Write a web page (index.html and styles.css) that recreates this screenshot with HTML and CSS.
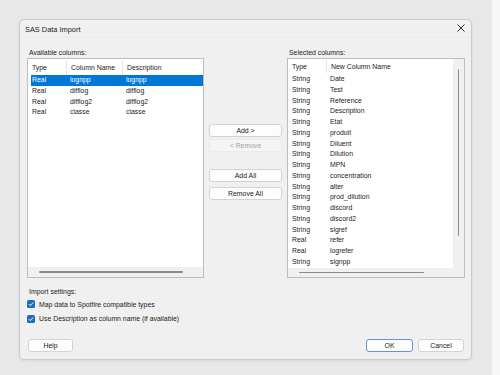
FILE: index.html
```html
<!DOCTYPE html>
<html lang="en">
<head>
    <meta charset="UTF-8">
    <meta name="viewport" content="width=device-width, initial-scale=1.0">
    <title>SAS Data Import</title>
    <link rel="stylesheet" href="styles.css">
</head>
<body>
    <div class="screen">
        <div class="dialog">
            <!-- Title bar -->
            <div class="titlebar">
                <span class="title">SAS Data Import</span>
                <svg class="close" width="8" height="8" viewBox="0 0 8 8">
                    <path d="M0.5 0.5 L7.5 7.5 M7.5 0.5 L0.5 7.5" stroke="#2b2b2b" stroke-width="1" fill="none"/>
                </svg>
            </div>

            <div class="content">
                <div class="columns">
                    <!-- Available columns -->
                    <div class="panel panel-left">
                        <div class="label">Available columns:</div>
                        <div class="list">
                            <div class="list-main">
                                <div class="list-head">
                                    <span class="c1">Type</span>
                                    <span class="c2 sep">Column Name</span>
                                    <span class="c3 sep">Description</span>
                                </div>
                                <div class="list-body">
                                    <div class="row selected"><span class="c1">Real</span><span class="c2">lognpp</span><span class="c3">lognpp</span></div>
                                    <div class="row"><span class="c1">Real</span><span class="c2">difflog</span><span class="c3">difflog</span></div>
                                    <div class="row"><span class="c1">Real</span><span class="c2">difflog2</span><span class="c3">difflog2</span></div>
                                    <div class="row"><span class="c1">Real</span><span class="c2">classe</span><span class="c3">classe</span></div>
                                </div>
                                <div class="hscroll"><div class="hthumb thumb-left"></div></div>
                            </div>
                        </div>
                    </div>

                    <!-- Move buttons -->
                    <div class="actions">
                        <button class="btn btn-add">Add &gt;</button>
                        <button class="btn btn-remove" disabled>&lt; Remove</button>
                        <button class="btn btn-addall">Add All</button>
                        <button class="btn btn-removeall">Remove All</button>
                    </div>

                    <!-- Selected columns -->
                    <div class="panel panel-right">
                        <div class="label">Selected columns:</div>
                        <div class="list">
                            <div class="list-main">
                                <div class="list-head">
                                    <span class="c1">Type</span>
                                    <span class="c2 sep">New Column Name</span>
                                </div>
                                <div class="list-body" id="selected-rows"></div>
                                <div class="hscroll"><div class="hthumb thumb-right"></div></div>
                            </div>
                            <div class="vscroll"><div class="vthumb"></div></div>
                        </div>
                    </div>
                </div>

                <!-- Import settings -->
                <div class="settings">
                    <div class="label">Import settings:</div>
                    <label class="check">
                        <svg width="8" height="8" viewBox="0 0 8 8"><rect width="8" height="8" rx="1.6" fill="#1f6cc4"/><path d="M1.8 4.1 L3.3 5.6 L6.2 2.5" stroke="#fff" stroke-width="1" fill="none"/></svg>
                        <span>Map data to Spotfire compatible types</span>
                    </label>
                    <label class="check">
                        <svg width="8" height="8" viewBox="0 0 8 8"><rect width="8" height="8" rx="1.6" fill="#1f6cc4"/><path d="M1.8 4.1 L3.3 5.6 L6.2 2.5" stroke="#fff" stroke-width="1" fill="none"/></svg>
                        <span>Use Description as column name (if available)</span>
                    </label>
                </div>

                <!-- Footer -->
                <div class="footer">
                    <button class="btn btn-help">Help</button>
                    <div class="footer-right">
                        <button class="btn btn-ok">OK</button>
                        <button class="btn btn-cancel">Cancel</button>
                    </div>
                </div>
            </div>
        </div>
    </div>
    <div class="edge"></div>

    <script>
        const selected = [
            ['String', 'Date'], ['String', 'Test'], ['String', 'Reference'], ['String', 'Description'],
            ['String', 'Etat'], ['String', 'produit'], ['String', 'Diluent'], ['String', 'Dilution'],
            ['String', 'MPN'], ['String', 'concentration'], ['String', 'alter'], ['String', 'prod_dilution'],
            ['String', 'discord'], ['String', 'discord2'], ['String', 'sigref'], ['Real', 'refer'],
            ['Real', 'logrefer'], ['String', 'signpp']
        ];
        const body = document.getElementById('selected-rows');
        selected.forEach(col => {
            const row = document.createElement('div');
            row.className = 'row';
            row.innerHTML = `<span class="c1">${col[0]}</span><span class="c2">${col[1]}</span>`;
            body.appendChild(row);
        });
    </script>
</body>
</html>
```

FILE: styles.css
```css
* { box-sizing: border-box; }
html, body { margin: 0; height: 100%; }
body { display: flex; background: #e8e8e8; font-family: "Liberation Sans", Arial, sans-serif; font-size: 6.9px; color: #1b1b1b; overflow: hidden; }

.screen { flex: 1; padding: 19px 0 0 19px; }
.edge { width: 8px; background: #f6f6f6; }

.dialog { width: 453px; height: 341px; background: #f0f0f0; border: 1px solid #cbcbcb; border-radius: 5px; display: flex; flex-direction: column; box-shadow: 0 1px 3px rgba(0, 0, 0, 0.08); }

.titlebar { height: 18px; display: flex; align-items: center; justify-content: space-between; padding: 1px 6px 0 5px; border-bottom: 1px solid #ebebeb; }
.title { font-size: 7.4px; }
.close { margin-top: -2px; }

.content { flex: 1; display: flex; flex-direction: column; padding: 0 6px 7px 7px; }

.columns { display: flex; gap: 5px; margin-top: 10px; }
.panel-left { width: 177px; }
.panel-right { width: 178px; }
.label { height: 10px; line-height: 10px; padding-left: 2px; }

.list { height: 220px; border: 1px solid #bdbdbd; background: #fff; display: flex; }
.list-main { flex: 1; display: flex; flex-direction: column; }
.list-head { height: 16px; display: flex; align-items: center; padding-left: 3px; }
.list-head span { height: 13px; line-height: 13px; }
.list-head .sep { border-left: 1px solid #e4e4e4; }
.list-body { flex: 1; padding-left: 3px; }
.row { height: 10.75px; line-height: 10.75px; display: flex; white-space: nowrap; }
.row.selected { background: #0078d7; color: #fff; }
.c1 { width: 35px; padding-left: 1px; }
.c2 { width: 56px; padding-left: 4px; }
.c3 { flex: 1; padding-left: 4px; }
.panel-right .c2 { flex: 1; }

.hscroll { height: 10px; background: #f0f0f0; display: flex; align-items: center; padding-left: 11px; }
.hthumb { height: 1.5px; background: #8c8c8c; border-radius: 1px; }
.thumb-left { width: 144px; }
.thumb-right { width: 125px; }
.vscroll { width: 11px; background: #f0f0f0; display: flex; justify-content: center; padding-top: 10px; }
.vthumb { width: 1.5px; height: 167px; background: #8c8c8c; border-radius: 1px; }

.btn { font-family: inherit; font-size: 6.9px; color: #1b1b1b; height: 13px; padding: 0; background: #fdfdfd; border: 1px solid #d3d3d3; border-radius: 3px; }
.actions { width: 73px; display: flex; flex-direction: column; padding-top: 76px; }
.btn-remove { margin-top: 2px; background: #f5f5f5; border-color: #ebebeb; color: #a3a3a3; }
.btn-addall { margin-top: 17px; }
.btn-removeall { margin-top: 5px; }

.settings { margin-top: 9px; }
.check { display: flex; align-items: center; gap: 4px; height: 12px; margin-top: 2.5px; }
.check:first-of-type { margin-top: 1px; }

.footer { margin-top: auto; display: flex; justify-content: space-between; padding: 0 1px; }
.btn-help { width: 45px; }
.footer-right { display: flex; gap: 5px; }
.btn-ok { width: 47px; border-color: #5f97d2; }
.btn-cancel { width: 46px; }
```
